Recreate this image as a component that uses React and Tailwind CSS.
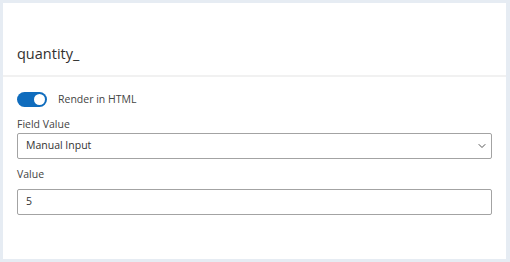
import { ChevronDown } from 'lucide-react';

function Toggle({ on = true }) {
  return (
    <div className={`flex h-[15px] w-[30px] items-center rounded-full px-[2px] ${on ? 'justify-end bg-[#0f6cbd]' : 'justify-start bg-[#c8c8c8]'}`}>
      <div className="h-[11px] w-[11px] rounded-full bg-white" />
    </div>
  );
}

export default function App() {
  return (
    <div
      className="h-[262px] w-[510px] bg-[#e6ecf3] pb-[3px] pl-[3px] pr-[4px] pt-[3px] text-[#333]"
      style={{ fontFamily: '"Open Sans", "Noto Sans", Arial, sans-serif' }}
    >
      <div className="flex h-full flex-col bg-white">
        <div className="h-[72px] px-[14px] pt-[41px]">
          <h1 className="text-[14.5px] leading-[20px] text-[#323130]">quantity_</h1>
        </div>
        <div className="h-[2px] bg-[#f1f1f1]" />

        <div className="px-[14px] pt-[15px]">
          <div className="flex items-center gap-[11px]">
            <Toggle />
            <span className="text-[10.5px] leading-[15px] text-[#444]">Render in HTML</span>
          </div>

          <label className="mt-[10px] block text-[10.5px] leading-[15px] text-[#444]">Field Value</label>
          <div className="mt-[1px] flex h-[26px] items-center justify-between rounded-[2px] border border-[#a3a3a3] pl-[8px] pr-[3px]">
            <span className="text-[10.5px] text-[#333]">Manual Input</span>
            <ChevronDown size={12} strokeWidth={2} className="text-[#555]" />
          </div>

          <label className="mt-[8px] block text-[10.5px] leading-[15px] text-[#444]">Value</label>
          <div className="mt-[7px] flex h-[26px] items-center rounded-[2px] border border-[#a3a3a3] pl-[8px]">
            <span className="text-[10.5px] text-[#333]">5</span>
          </div>
        </div>
      </div>
    </div>
  );
}
